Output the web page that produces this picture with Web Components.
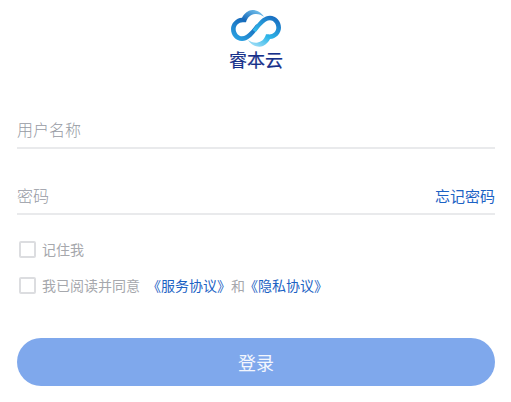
<!DOCTYPE html>
<html lang="zh">
<head>
<meta charset="utf-8">
<title>登录</title>
<style>
html, body { margin: 0; padding: 0; background: #fff; height: 402px; overflow: hidden; }
body { font-family: "Noto Sans CJK SC", "Liberation Sans", sans-serif; }
</style>
</head>
<body>
<login-page></login-page>

<script>
class AppLogo extends HTMLElement {
	constructor() {
		super();
		this.attachShadow({mode: 'open'});
		this.shadowRoot.innerHTML = `
			<style>
			:host {
				display: flex;
				flex-direction: column;
				align-items: center;
			}
			svg {
				display: block;
				width: 50px;
				height: 37px;
			}
			.name {
				margin-top: 1px;
				font-size: 18px;
				line-height: 22px;
				font-weight: 400;
				color: #16308a;
				-webkit-text-stroke: 0.2px #16308a;
			}
			</style>
			<svg viewBox="65 28 150 111">
				<defs>
					<linearGradient id="a" x1="0.9" y1="0" x2="0.3" y2="1">
						<stop offset="0" stop-color="#7cc9f1"/>
						<stop offset="0.45" stop-color="#1669ba"/>
						<stop offset="1" stop-color="#2a9fe0"/>
					</linearGradient>
					<linearGradient id="b" x1="0.9" y1="0" x2="0.3" y2="1">
						<stop offset="0" stop-color="#a9e1f7"/>
						<stop offset="0.45" stop-color="#2fb6e9"/>
						<stop offset="1" stop-color="#1a70c2"/>
					</linearGradient>
				</defs>
				<path fill="url(#a)" d="M164 48C154 32 134 24 119 30C108 35 102 43 98 51C80 52 65 68 65 85C65 105 80 121 98 121C115 121 128 108 140 92L150 78L141 71C130 84 115 107 98 107C88 107 79 97 79 85C79 73 90 63 104 65L110 65C114 50 124 41 137 40C148 39 156 43 164 48Z"/>
				<path fill="url(#b)" transform="rotate(180 140 83)" d="M164 48C154 32 134 24 119 30C108 35 102 43 98 51C80 52 65 68 65 85C65 105 80 121 98 121C115 121 128 108 140 92L150 78L141 71C130 84 115 107 98 107C88 107 79 97 79 85C79 73 90 63 104 65L110 65C114 50 124 41 137 40C148 39 156 43 164 48Z"/>
			</svg>
			<div class="name">睿本云</div>
		`;
	}
}

class TextField extends HTMLElement {
	constructor() {
		super();
		this.attachShadow({mode: 'open'});
		this.shadowRoot.innerHTML = `
			<style>
			:host {
				display: flex;
				align-items: center;
				justify-content: space-between;
				height: 36px;
				padding-top: 4px;
				border-bottom: 2px solid #e9eaec;
				font-size: 16px;
				font-weight: 300;
				color: #969aa3;
			}
			::slotted([slot="extra"]) {
				font-size: 15px;
				font-weight: 400;
				color: #1c62c4;
			}
			</style>
			<span class="label"></span>
			<slot name="extra"></slot>
		`;
	}

	connectedCallback() {
		this.shadowRoot.querySelector('.label').textContent = this.getAttribute('label');
	}
}

class CheckRow extends HTMLElement {
	constructor() {
		super();
		this.attachShadow({mode: 'open'});
		this.shadowRoot.innerHTML = `
			<style>
			:host {
				display: flex;
				align-items: center;
				gap: 6px;
				height: 18px;
				margin-left: 2px;
				font-size: 14px;
				line-height: 18px;
				color: #a6a8ad;
			}
			.box {
				box-sizing: border-box;
				width: 17px;
				height: 17px;
				flex: none;
				border: 2px solid #dcdde0;
				border-radius: 2px;
			}
			::slotted(a) {
				color: #1c62c4;
			}
			</style>
			<span class="box"></span>
			<span><slot></slot></span>
		`;
	}
}

class PrimaryButton extends HTMLElement {
	constructor() {
		super();
		this.attachShadow({mode: 'open'});
		this.shadowRoot.innerHTML = `
			<style>
			:host {
				display: flex;
				align-items: center;
				justify-content: center;
				height: 48px;
				border-radius: 24px;
				background: #7fa8ec;
				color: #f3f6fd;
				font-size: 18px;
			}
			</style>
			<slot></slot>
		`;
	}
}

class LoginPage extends HTMLElement {
	constructor() {
		super();
		this.attachShadow({mode: 'open'});
		this.shadowRoot.innerHTML = `
			<style>
			:host {
				display: flex;
				flex-direction: column;
				padding: 10px 16px 0 17px;
			}
			.fields {
				display: flex;
				flex-direction: column;
				gap: 24px;
				margin-top: 37px;
			}
			.checks {
				display: flex;
				flex-direction: column;
				gap: 18px;
				margin-top: 25px;
			}
			.gap {
				margin-left: 7px;
			}
			.tight {
				margin-left: -1px;
			}
			primary-button {
				margin-top: 44px;
			}
			</style>
			<app-logo></app-logo>
			<div class="fields">
				<text-field label="用户名称"></text-field>
				<text-field label="密码"><span slot="extra">忘记密码</span></text-field>
			</div>
			<div class="checks">
				<check-row>记住我</check-row>
				<check-row>我已阅读并同意<a class="gap">《服务协议》</a>和<a class="tight">《隐私协议》</a></check-row>
			</div>
			<primary-button>登录</primary-button>
		`;
	}
}

customElements.define('app-logo', AppLogo);
customElements.define('text-field', TextField);
customElements.define('check-row', CheckRow);
customElements.define('primary-button', PrimaryButton);
customElements.define('login-page', LoginPage);
</script>
</body>
</html>
